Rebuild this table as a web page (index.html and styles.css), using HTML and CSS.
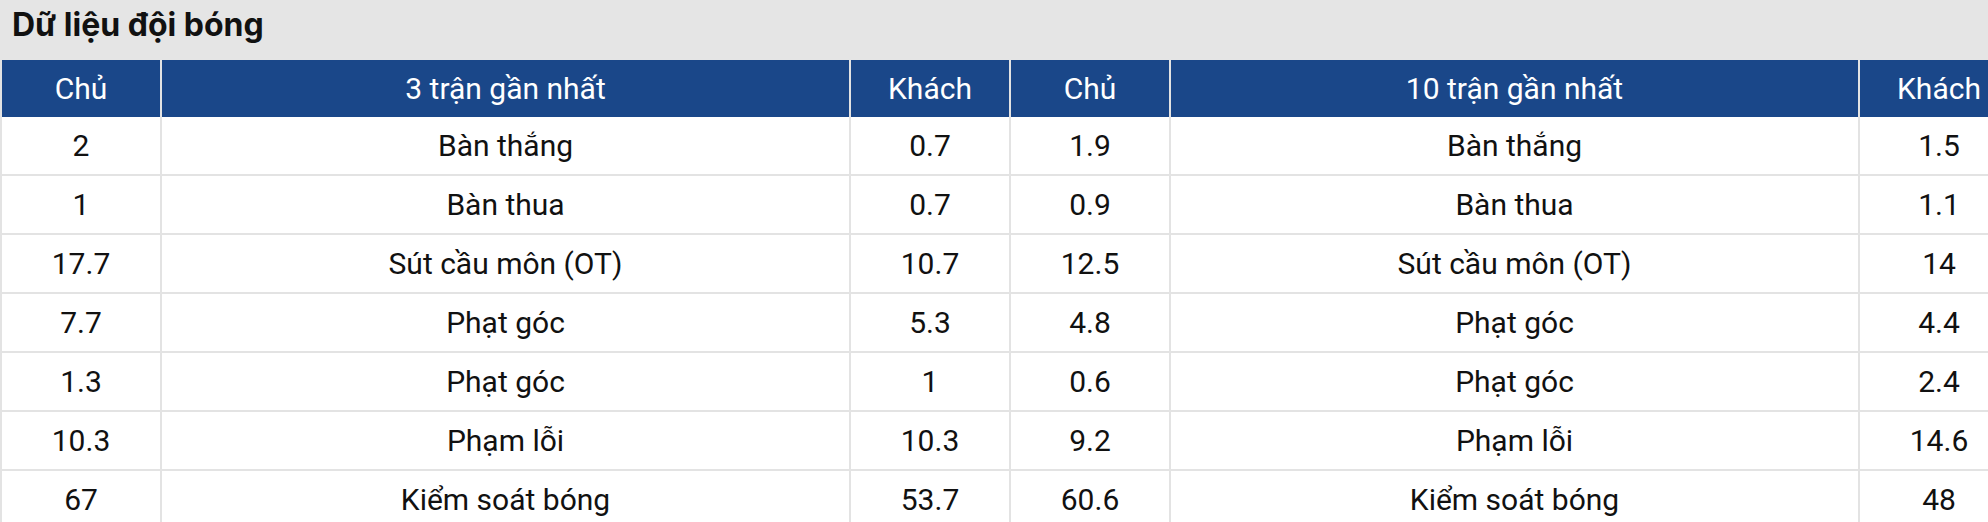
FILE: index.html
```html
<!DOCTYPE html>
<html lang="vi">
<head>
<meta charset="utf-8">
<title>Dữ liệu đội bóng</title>
<link rel="stylesheet" href="styles.css">
</head>
<body>
<div class="panel">
  <div class="panel-title">Dữ liệu đội bóng</div>
  <div class="table-wrap">
    <table class="stats">
      <colgroup>
        <col class="c-num"><col class="c-label"><col class="c-num"><col class="c-num"><col class="c-label"><col class="c-num">
      </colgroup>
      <thead>
        <tr><th>Chủ</th><th>3 trận gần nhất</th><th>Khách</th><th>Chủ</th><th>10 trận gần nhất</th><th>Khách</th></tr>
      </thead>
      <tbody>
        <tr><td>2</td><td>Bàn thắng</td><td>0.7</td><td>1.9</td><td>Bàn thắng</td><td>1.5</td></tr>
        <tr><td>1</td><td>Bàn thua</td><td>0.7</td><td>0.9</td><td>Bàn thua</td><td>1.1</td></tr>
        <tr><td>17.7</td><td>Sút cầu môn (OT)</td><td>10.7</td><td>12.5</td><td>Sút cầu môn (OT)</td><td>14</td></tr>
        <tr><td>7.7</td><td>Phạt góc</td><td>5.3</td><td>4.8</td><td>Phạt góc</td><td>4.4</td></tr>
        <tr><td>1.3</td><td>Phạt góc</td><td>1</td><td>0.6</td><td>Phạt góc</td><td>2.4</td></tr>
        <tr><td>10.3</td><td>Phạm lỗi</td><td>10.3</td><td>9.2</td><td>Phạm lỗi</td><td>14.6</td></tr>
        <tr><td>67</td><td>Kiểm soát bóng</td><td>53.7</td><td>60.6</td><td>Kiểm soát bóng</td><td>48</td></tr>
      </tbody>
    </table>
  </div>
</div>
</body>
</html>
```

FILE: styles.css
```css
html, body {
  margin: 0;
  padding: 0;
  background: #ffffff;
  overflow: hidden;
}

body {
  font-family: Roboto, "Noto Sans", "DejaVu Sans", sans-serif;
  color: #111111;
}

.panel {
  width: 100%;
}

.panel-title {
  background: #e5e5e5;
  height: 60px;
  box-sizing: border-box;
  padding: 5px 12px 15px;
  font-family: Inter, "Noto Sans", sans-serif;
  font-size: 32px;
  line-height: 40px;
  font-weight: 700;
  color: #111111;
}

.table-wrap {
  width: 100%;
  overflow: hidden;
}

.stats {
  border-collapse: collapse;
  table-layout: fixed;
  width: 2018px;
  font-size: 30px;
  border-left: 1px solid #e3e3e3;
}

.c-num { width: 160px; }
.c-label { width: 689px; }

.stats th {
  background: #1a4789;
  color: #ffffff;
  font-weight: 400;
  height: 57px;
  padding: 0;
  text-align: center;
  border-left: 2px solid #e3e3e3;
  border-right: 2px solid #e3e3e3;
}

.stats td {
  height: 57px;
  padding: 0;
  text-align: center;
  color: #111111;
  border: 2px solid #e3e3e3;
  border-top: none;
}
```
